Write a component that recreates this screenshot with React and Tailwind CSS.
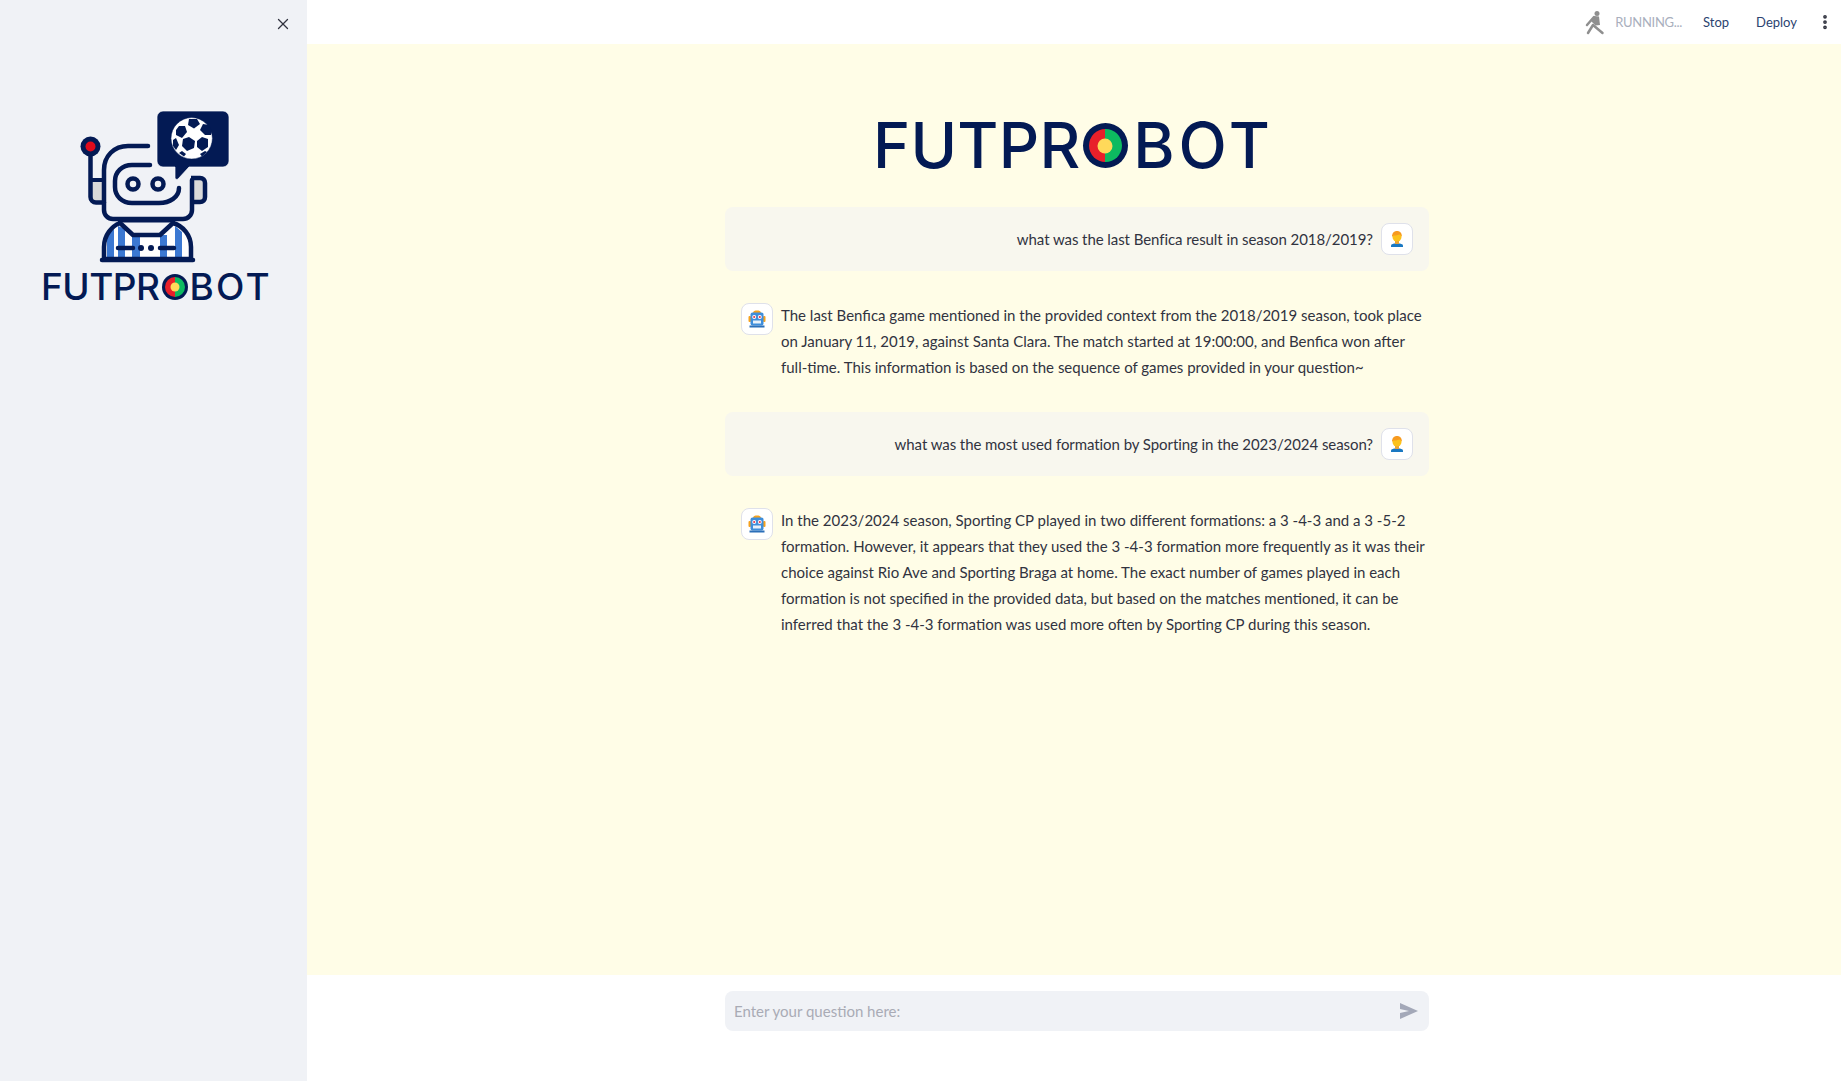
import React from 'react'
import { X, EllipsisVertical } from 'lucide-react'

const FONT = "font-['Lato','Noto_Sans',sans-serif]"

const CHAT = [
  { role: 'user', lines: ['what was the last Benfica result in season 2018/2019?'] },
  {
    role: 'bot',
    lines: [
      'The last Benfica game mentioned in the provided context from the 2018/2019 season, took place',
      'on January 11, 2019, against Santa Clara. The match started at 19:00:00, and Benfica won after',
      'full-time. This information is based on the sequence of games provided in your question~',
    ],
  },
  { role: 'user', lines: ['what was the most used formation by Sporting in the 2023/2024 season?'] },
  {
    role: 'bot',
    lines: [
      'In the 2023/2024 season, Sporting CP played in two different formations: a 3 -4-3 and a 3 -5-2',
      'formation. However, it appears that they used the 3 -4-3 formation more frequently as it was their',
      'choice against Rio Ave and Sporting Braga at home. The exact number of games played in each',
      'formation is not specified in the provided data, but based on the matches mentioned, it can be',
      'inferred that the 3 -4-3 formation was used more often by Sporting CP during this season.',
    ],
  },
]

function Robot() {
  const navy = '#031a54'
  return (
    <svg width="180" height="170" viewBox="0 0 180 170" fill="none" className="block">
      {/* shirt */}
      <path d="M44 159V147C44 135 52 126 60 123L73 135H100L113 123C123 126 131 135 131 147V159Z" fill="#fff" />
      <path d="M47 135V157H54V129Z M58 126V157H65V129Z M72 135V157H80V135Z M100 135V157H107V135Z M115 126V157H122V132Z" fill="#3b78d2" />
      <path d="M44 159V147C44 135 52 126 60 123L73 135H100L113 123C123 126 131 135 131 147V159Z" stroke={navy} strokeWidth="4.5" strokeLinejoin="round" />
      <path d="M58 121H115" stroke={navy} strokeWidth="3" />
      <path d="M58 148H73M100 148H114" stroke={navy} strokeWidth="4.5" strokeLinecap="round" />
      <circle cx="81" cy="148" r="3" fill={navy} />
      <circle cx="91" cy="148" r="3" fill={navy} />
      <path d="M42 160H133" stroke={navy} strokeWidth="4.5" strokeLinecap="round" />
      {/* ears */}
      <rect x="32" y="80" width="12" height="22" rx="2" fill="#d9d9d9" />
      <rect x="132" y="80" width="12" height="22" rx="2" fill="#d9d9d9" />
      <path d="M30.5 50V97C30.5 100 33 102.500 36 102.500H44" stroke={navy} strokeWidth="4.5" strokeLinecap="round" />
      <path d="M31 80H44" stroke={navy} strokeWidth="4" />
      <path d="M131 78H140C143 78 145 80 145 83V97C145 100 143 102 140 102H132" stroke={navy} strokeWidth="4.5" />
      {/* head */}
      <path d="M88 46H68C54 46 44 56 44 70V110C44 115 48 119 53 119H123C128 119 132 115 132 110V80" stroke={navy} strokeWidth="4.500" strokeLinecap="round" />
      <path d="M90 65H72C62 65 55 72 55 81V87C55 96 62 103 72 103H99C110 103 119 97 119 88" stroke={navy} strokeWidth="4.500" strokeLinecap="round" />
      <circle cx="73" cy="84" r="5.500" stroke={navy} strokeWidth="4.500" />
      <circle cx="98" cy="84" r="5.500" stroke={navy} strokeWidth="4.500" />
      {/* antenna */}
      <circle cx="30.500" cy="46.500" r="10" fill={navy} />
      <circle cx="30.500" cy="46.500" r="5" fill="#e00b1c" />
      {/* speech bubble */}
      <path d="M103 11H163C166 11 169 14 169 17V61C169 64 166 67 163 67H129L118 79C117 80 115 79 115 78V67H103C100 67 97 64 97 61V17C97 14 100 11 103 11Z" fill={navy} stroke="#fff" strokeWidth="0.700" />
      {/* ball */}
      <circle cx="131.700" cy="38.300" r="20.700" fill="#fff" />
      <g fill={navy}>
        <path d="M129 19L137 19L140 24L134 28.500L128 25Z" />
        <path d="M129 37L135 41L134 48L127 51L122 46L123 39Z" />
        <path d="M142 37L148 39L148 47L142 51L137 47L137 41Z" />
        <path d="M119 26L125 26L127 32L122 38L116 35L116 30Z" />
        <path d="M143 24L149 25L152 31L151 35L145 35L140 30Z" />
        <path d="M113 40L116 38L119 45L116 50L113 46Z" />
        <path d="M119 53L122 51L126 54L124 56.500Z" />
        <path d="M140 54L145 51L147 52L142 56.500Z" />
      </g>
      <circle cx="131.700" cy="38.300" r="20.700" stroke={navy} strokeWidth="0.500" />
    </svg>
  )
}

function Wordmark({ textClass, leadClass, tailClass, ringClass, innerClass, dotClass }) {
  return (
    <div className={`flex items-center text-[#031a54] leading-none ${textClass}`}>
      <span className={leadClass}>FUTPR</span>
      <div className={`shrink-0 rounded-full bg-[#031a54] flex items-center justify-center ${ringClass}`}>
        <div className={`relative rounded-full overflow-hidden flex ${innerClass}`}>
          <div className="flex-1 bg-[#e8202a]" />
          <div className="flex-1 bg-[#0dba60]" />
          <div className={`absolute left-1/2 top-1/2 -translate-x-1/2 -translate-y-1/2 rounded-full bg-[#ffd95a] ${dotClass}`} />
        </div>
      </div>
      <span className={tailClass}>BOT</span>
    </div>
  )
}

function UserFace() {
  return (
    <svg width="16" height="18" viewBox="0 0 16 18">
      <path d="M2 17V15.500C2 14.500 3.500 14 5 13.500H11C12.500 14 14 14.500 14 15.500V17Z" fill="#1a78c2" />
      <rect x="6" y="11" width="4" height="3" fill="#e8a33a" />
      <circle cx="8" cy="7" r="4.500" fill="#fcc21b" />
      <path d="M3 7C3 3 5 1 8 1S13 3 13 7C12.500 5.500 11.500 5 10.500 4.500 8 5.500 5.500 5.500 4.500 5.500 3.800 6 3.300 6.500 3 7Z" fill="#f79a1f" />
    </svg>
  )
}

function BotFace() {
  return (
    <svg width="18" height="18" viewBox="0 0 18 18">
      <path d="M5 3C5 1 7 .5 9 .5S13 1 13 3Z" fill="#f6a21e" />
      <rect x="0.500" y="6" width="2.500" height="6" rx="1" fill="#f6a21e" />
      <rect x="15" y="6" width="2.500" height="6" rx="1" fill="#f6a21e" />
      <rect x="2.500" y="2.500" width="13" height="13" rx="2" fill="#3e8edb" />
      <circle cx="6.200" cy="7" r="2" fill="#fff" />
      <circle cx="11.800" cy="7" r="2" fill="#fff" />
      <circle cx="6.200" cy="7" r="1.100" fill="#e2344a" />
      <circle cx="11.800" cy="7" r="1.100" fill="#e2344a" />
      <rect x="5" y="10.500" width="8" height="3" fill="#e8f1fa" />
      <rect x="1.500" y="15.500" width="15" height="2" fill="#2b6fb8" />
    </svg>
  )
}

function Avatar({ role }) {
  return (
    <div className="w-8 h-8 shrink-0 rounded-lg bg-white border border-[#dfe1ea] flex items-center justify-center">
      {role === 'user' ? <UserFace /> : <BotFace />}
    </div>
  )
}

function Message({ role, lines }) {
  if (role === 'user') {
    return (
      <div className="flex items-center justify-end gap-2 p-4 rounded-lg bg-[#f8f7ee]">
        <p className="text-right whitespace-nowrap tracking-[-0.07px]">{lines[0]}</p>
        <Avatar role="user" />
      </div>
    )
  }
  return (
    <div className="flex gap-2 p-4">
      <Avatar role="bot" />
      <div className="leading-[26px] -mt-px -mb-[0.2px] whitespace-nowrap">
        {lines.map((l) => (
          <p key={l}>{l}</p>
        ))}
      </div>
    </div>
  )
}

export default function App() {
  return (
    <div className={`flex h-[1081px] overflow-hidden bg-white text-[15px] text-[#31333f] ${FONT}`}>
      {/* sidebar */}
      <aside className="w-[307px] shrink-0 bg-[#f0f2f6] relative">
        <button className="absolute left-[274px] top-[15px] text-[#31333f]" aria-label="Close sidebar">
          <X size={18} strokeWidth={1.700} />
        </button>
        <div className="pt-[100px] pl-[60px]">
          <Robot />
        </div>
        <div className="pl-[41px] -mt-[2px]">
          <Wordmark
            textClass="text-[37px] font-medium font-['Inter',sans-serif]"
            leadClass="tracking-[-0.5px] mr-[2px]"
            tailClass="tracking-[2.2px] ml-[2px]"
            ringClass="w-[26px] h-[26px]"
            innerClass="w-[20px] h-[20px]"
            dotClass="w-[9px] h-[9px]"
          />
        </div>
      </aside>

      <div className="flex-1 flex flex-col min-w-0">
        {/* top bar */}
        <header className="h-[44px] shrink-0 flex items-center text-[13px]">
          <div className="ml-auto flex items-center">
            <svg width="20" height="25" viewBox="0 0 20 25" className="mr-[10px]">
              <circle cx="12" cy="3.500" r="2.500" fill="#8f8f8f" />
              <path d="M9 6L14 6.500L15 15L10.500 15.500L6 11Z" fill="#8f8f8f" />
              <path d="M9 7L2 15M8 15L17.500 23M8 15L3 23" stroke="#8f8f8f" strokeWidth="2.500" strokeLinecap="round" fill="none" />
            </svg>
            <span className="text-[#a9afbd] pt-px tracking-[-0.3px]">RUNNING...</span>
            <span className="ml-[21px] pt-px text-[#2b4370]">Stop</span>
            <span className="ml-[27px] pt-px text-[#2b4370]">Deploy</span>
            <EllipsisVertical size={18} strokeWidth={3} className="ml-[19px] mr-[7px] text-[#31333f]" />
          </div>
        </header>

        {/* chat */}
        <main className="flex-1 bg-[#fffde7] min-h-0">
          <div className="ml-[418px] w-[704px]">
            <div className="pt-[70px] pl-[148px] h-[163px]">
              <Wordmark
                textClass="text-[63px] font-medium font-['Inter',sans-serif]"
                leadClass="tracking-[0.3px] mr-[2px]"
                tailClass="tracking-[3.8px] ml-[5.7px]"
                ringClass="w-[45px] h-[45px]"
                innerClass="w-[33px] h-[33px]"
                dotClass="w-[15px] h-[15px]"
              />
            </div>
            <div className="flex flex-col gap-4">
              {CHAT.map((m, i) => (
                <Message key={i} role={m.role} lines={m.lines} />
              ))}
            </div>
          </div>
        </main>

        {/* input */}
        <footer className="h-[106px] shrink-0 pt-4">
          <div className="ml-[418px] w-[704px] h-10 rounded-lg bg-[#f0f2f6] flex items-center pl-[9px] pr-[11px]">
            <span className="flex-1 text-[#a9abb5]">Enter your question here:</span>
            <svg width="18" height="16" viewBox="0 0 18 16">
              <path d="M0 0L18 8L0 16V10L9 8L0 6Z" fill="#a3a8b8" />
            </svg>
          </div>
        </footer>
      </div>
    </div>
  )
}
